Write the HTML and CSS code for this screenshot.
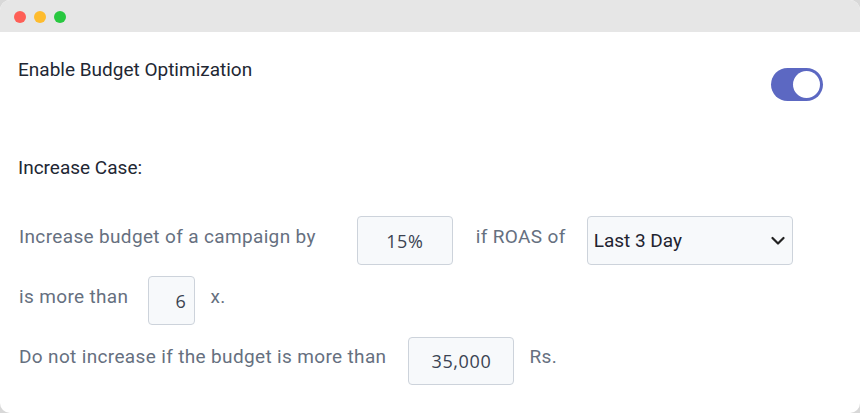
FILE: index.html
```html
<!DOCTYPE html>
<html lang="en">
<head>
<meta charset="utf-8">
<title>Budget Optimization</title>
<link rel="stylesheet" href="styles.css">
</head>
<body>
<div class="window">
  <div class="titlebar">
    <span class="dot red"></span>
    <span class="dot yellow"></span>
    <span class="dot green"></span>
  </div>
  <div class="content">
    <div class="head-row">
      <div class="title">Enable Budget Optimization</div>
      <div class="toggle"><span class="knob"></span></div>
    </div>
    <div class="section">Increase Case:</div>
    <div class="row row1">
      <span class="label">Increase budget of a campaign by</span>
      <input class="field f-pct" type="text" value="15%" readonly>
      <span class="label l-roas">if ROAS of</span>
      <div class="select">
        <span>Last 3 Day</span>
        <svg class="chev" width="14" height="10" viewBox="0 0 14 10"><path d="M1.5 2 L7 7.5 L12.5 2" fill="none" stroke="#222" stroke-width="2.2" stroke-linecap="round" stroke-linejoin="round"/></svg>
      </div>
    </div>
    <div class="row row2">
      <span class="label">is more than</span>
      <input class="field f-x" type="text" value="6" readonly>
      <span class="label l-unit">x.</span>
    </div>
    <div class="row row3">
      <span class="label">Do not increase if the budget is more than</span>
      <input class="field f-amt" type="text" value="35,000" readonly>
      <span class="label l-unit">Rs.</span>
    </div>
  </div>
</div>
</body>
</html>
```

FILE: styles.css
```css
* { box-sizing: border-box; }
html, body { margin: 0; padding: 0; }
body {
  width: 860px;
  height: 413px;
  background: #d8d8d8;
  font-family: Roboto, "Liberation Sans", sans-serif;
  overflow: hidden;
}
.window {
  width: 860px;
  height: 413px;
  background: #ffffff;
  border-radius: 10px;
  overflow: hidden;
}
.titlebar {
  height: 32px;
  background: #e6e6e6;
  display: flex;
  align-items: center;
  gap: 8px;
  padding-left: 14px;
  padding-top: 2px;
}
.dot { width: 12px; height: 12px; border-radius: 50%; display: block; }
.red { background: #fe5f57; }
.yellow { background: #febc2e; }
.green { background: #28c840; }

.content { padding: 27px 37px 0 18px; }
.head-row {
  display: flex;
  justify-content: space-between;
  align-items: flex-start;
}
.title {
  font-size: 19px;
  line-height: 22px;
  color: #222733;
}
.toggle {
  margin-top: 9px;
  width: 52px;
  height: 33px;
  border-radius: 17px;
  background: #5c68c2;
  display: flex;
  align-items: center;
  justify-content: flex-end;
  padding-right: 3px;
}
.knob {
  width: 27px;
  height: 27px;
  border-radius: 50%;
  background: #fff;
  display: block;
}
.section {
  margin-top: 56px;
  font-size: 19px;
  line-height: 22px;
  color: #222733;
}
.row {
  display: flex;
  align-items: center;
  padding-left: 1px;
}
.row1 { margin-top: 37px; }
.row2 { margin-top: 11px; }
.row3 { margin-top: 12px; }
.label {
  font-size: 19px;
  line-height: 22px;
  color: #66707f;
  padding-bottom: 8px;
  letter-spacing: 0.35px;
}
.field {
  height: 49px;
  border: 1px solid #cdd3db;
  border-radius: 4px;
  background: #f7f9fb;
  font-family: "Open Sans", "DejaVu Sans", sans-serif;
  font-size: 18px;
  letter-spacing: 0.6px;
  color: #3b4352;
  text-align: center;
  outline: none;
  padding: 0 6px;
}
.f-pct { width: 96px; margin-left: 41px; }
.l-roas { margin-left: 23px; }
.f-x { width: 47px; margin-left: 20px; text-align: right; padding-right: 8px; }
.f-amt { width: 106px; height: 48px; margin-left: 22px; }
.l-unit { margin-left: 15px; }
.select {
  margin-left: 21px;
  width: 206px;
  height: 49px;
  border: 1px solid #cdd3db;
  border-radius: 4px;
  background: #f7f9fb;
  display: flex;
  align-items: center;
  justify-content: space-between;
  padding: 0 7px 0 6px;
  font-size: 19px;
  color: #1f2430;
}
.chev { display: block; }
```
